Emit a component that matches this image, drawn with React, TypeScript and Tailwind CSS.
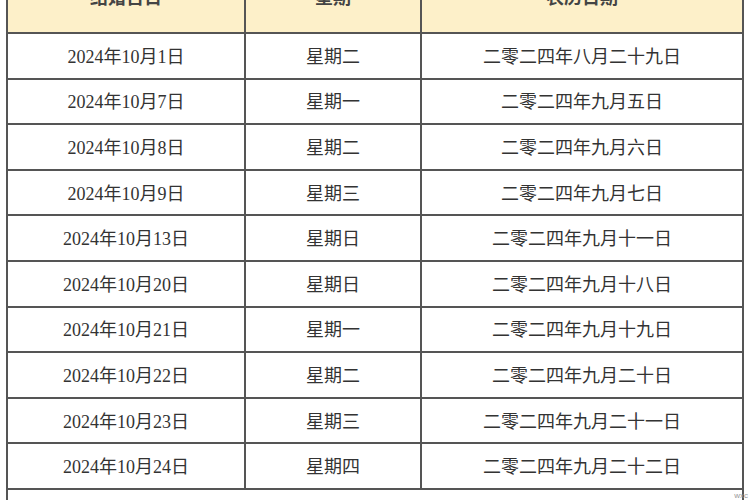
const rows = [
  ["2024年10月1日", "星期二", "二零二四年八月二十九日"],
  ["2024年10月7日", "星期一", "二零二四年九月五日"],
  ["2024年10月8日", "星期二", "二零二四年九月六日"],
  ["2024年10月9日", "星期三", "二零二四年九月七日"],
  ["2024年10月13日", "星期日", "二零二四年九月十一日"],
  ["2024年10月20日", "星期日", "二零二四年九月十八日"],
  ["2024年10月21日", "星期一", "二零二四年九月十九日"],
  ["2024年10月22日", "星期二", "二零二四年九月二十日"],
  ["2024年10月23日", "星期三", "二零二四年九月二十一日"],
  ["2024年10月24日", "星期四", "二零二四年九月二十二日"],
]

const font = { fontFamily: '"Liberation Serif", "Noto Sans CJK SC", serif' }

export default function App() {
  return (
    <div className="relative h-[500px] w-[750px] overflow-hidden bg-white text-[18px] text-[#333]" style={font}>
      <div className="ml-[6px] w-[738px] border-x-2 border-[#555]">
        <div className="grid h-[34px] grid-cols-[238px_176px_1fr] grid-rows-[32px] border-b-2 border-[#555] bg-[#fdf0c9] font-bold text-[#444]">
          <div className="flex min-h-0 items-end justify-center border-r-2 border-[#555] pb-[22px] leading-6">结婚吉日</div>
          <div className="flex min-h-0 items-end justify-center border-r-2 border-[#555] pb-[22px] leading-6">星期</div>
          <div className="flex min-h-0 items-end justify-center pb-[22px] leading-6">农历日期</div>
        </div>
        {rows.map((r) => (
          <div key={r[0]} className="grid h-[45.6px] grid-cols-[238px_176px_1fr] border-b-2 border-[#555]">
            <div className="flex items-center justify-center border-r-2 border-[#555] pt-[3px]">{r[0]}</div>
            <div className="flex items-center justify-center border-r-2 border-[#555] pt-[3px]">{r[1]}</div>
            <div className="flex items-center justify-center pt-[3px]">{r[2]}</div>
          </div>
        ))}
        <div className="h-[20px]" />
      </div>
      <span className="absolute bottom-0 right-[2px] text-[8px] leading-none text-[#999]" style={{ fontFamily: '"Liberation Sans", sans-serif' }}>
        wxc
      </span>
    </div>
  )
}
